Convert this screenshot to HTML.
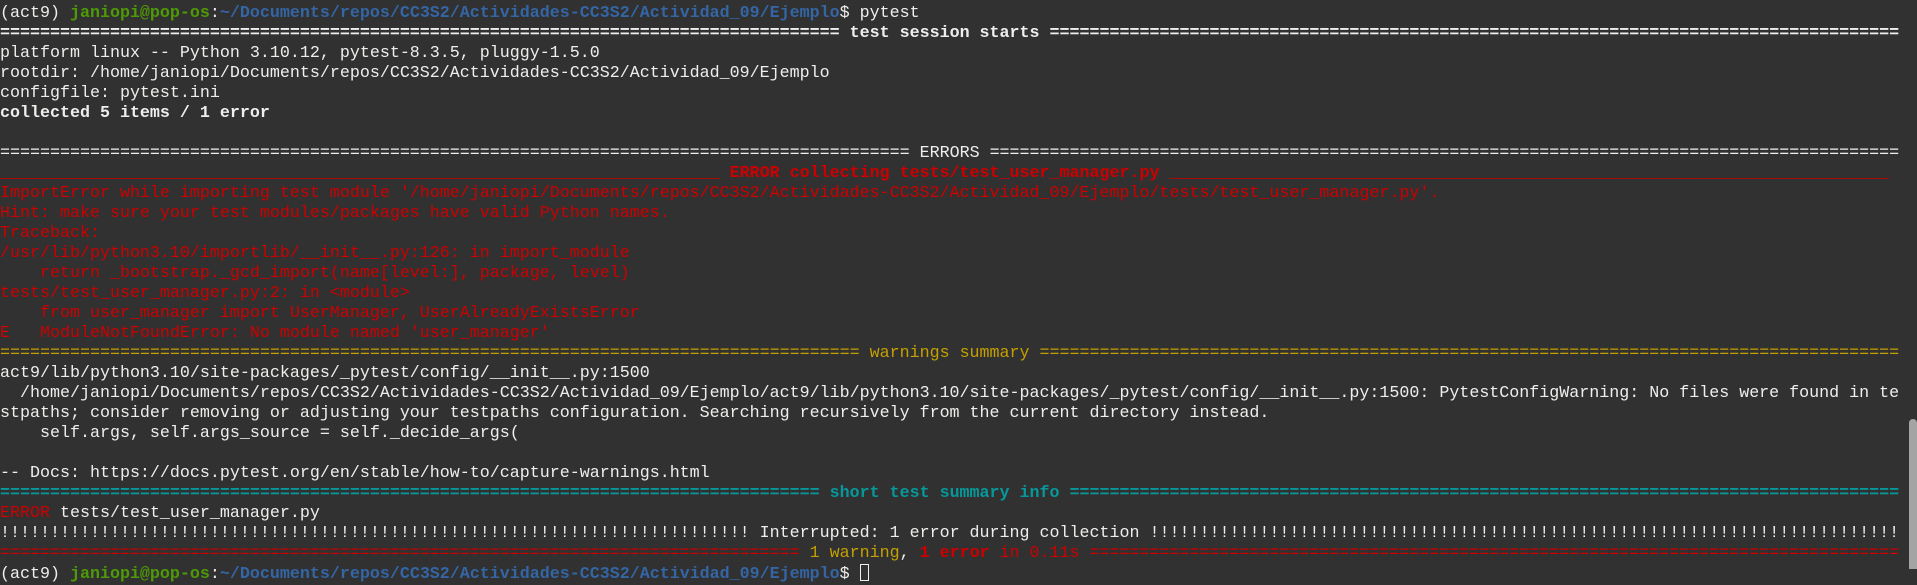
<!DOCTYPE html>
<html><head><meta charset="utf-8">
<style>
html,body{margin:0;padding:0;background:#313131;width:1917px;height:569px;overflow:hidden}
pre{margin:0;position:absolute;left:0;top:4px;font-family:"Liberation Mono",monospace;font-size:16.67px;line-height:20px;color:#eeeeec;white-space:pre}
.g{color:#4e9a06;font-weight:bold}.bl{color:#3465a4;font-weight:bold}
.r{color:#cc0000}.y{color:#c4a000}.c{color:#06989a}.b{font-weight:bold}
.cur{display:inline-block;width:9px;height:17px;border:1px solid #eee;vertical-align:-3px;box-sizing:border-box}
#sb{position:absolute;left:1909px;top:419px;width:8px;height:150px;background:#a4a4a4;border-radius:4px 4px 0 0}
</style></head><body>
<pre>(act9) <span class="g">janiopi@pop-os</span>:<span class="bl">~/Documents/repos/CC3S2/Actividades-CC3S2/Actividad_09/Ejemplo</span>$ pytest
<span class="b"><span id="a1"></span> test session starts <span id="a2"></span></span>
platform linux -- Python 3.10.12, pytest-8.3.5, pluggy-1.5.0
rootdir: /home/janiopi/Documents/repos/CC3S2/Actividades-CC3S2/Actividad_09/Ejemplo
configfile: pytest.ini
<span class="b">collected 5 items / 1 error</span>

<span id="b1"></span> ERRORS <span id="b2"></span>
<span class="r b"><span id="c1"></span> ERROR collecting tests/test_user_manager.py <span id="c2"></span></span>
<span class="r">ImportError while importing test module '/home/janiopi/Documents/repos/CC3S2/Actividades-CC3S2/Actividad_09/Ejemplo/tests/test_user_manager.py'.
Hint: make sure your test modules/packages have valid Python names.
Traceback:
/usr/lib/python3.10/importlib/__init__.py:126: in import_module
    return _bootstrap._gcd_import(name[level:], package, level)
tests/test_user_manager.py:2: in &lt;module&gt;
    from user_manager import UserManager, UserAlreadyExistsError
E   ModuleNotFoundError: No module named 'user_manager'</span>
<span class="y"><span id="d1"></span> warnings summary <span id="d2"></span></span>
act9/lib/python3.10/site-packages/_pytest/config/__init__.py:1500
  /home/janiopi/Documents/repos/CC3S2/Actividades-CC3S2/Actividad_09/Ejemplo/act9/lib/python3.10/site-packages/_pytest/config/__init__.py:1500: PytestConfigWarning: No files were found in te
stpaths; consider removing or adjusting your testpaths configuration. Searching recursively from the current directory instead.
    self.args, self.args_source = self._decide_args(

-- Docs: https://docs.pytest.org/en/stable/how-to/capture-warnings.html
<span class="c b"><span id="e1"></span> short test summary info <span id="e2"></span></span>
<span class="r">ERROR</span> tests/test_user_manager.py
<span id="f1"></span> Interrupted: 1 error during collection <span id="f2"></span>
<span class="r"><span id="g1"></span> <span class="y">1 warning</span><span style="color:#eeeeec">, </span><span class="b">1 error</span> in 0.11s <span id="g2"></span></span>
(act9) <span class="g">janiopi@pop-os</span>:<span class="bl">~/Documents/repos/CC3S2/Actividades-CC3S2/Actividad_09/Ejemplo</span>$ <span class="cur"></span></pre>
<div id="sb"></div>
<script>
function s(id,ch,n){document.getElementById(id).textContent=ch.repeat(n);}
s('a1','=',84);s('a2','=',85);
s('b1','=',91);s('b2','=',91);
s('c1','_',72);s('c2','_',72);
s('d1','=',86);s('d2','=',86);
s('e1','=',82);s('e2','=',83);
s('f1','!',75);s('f2','!',75);
s('g1','=',80);s('g2','=',81);
</script>
</body></html>
